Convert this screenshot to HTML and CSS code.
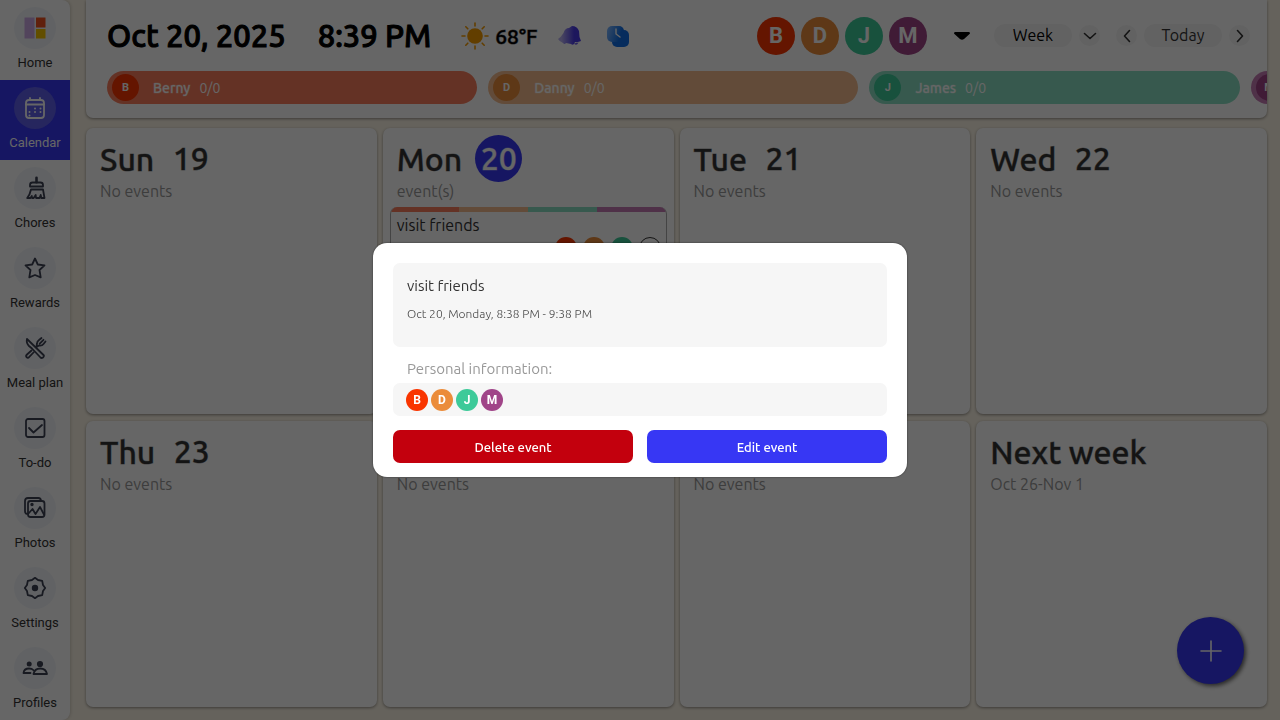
FILE: index.html
```html
<!DOCTYPE html>
<html lang="en">
<head>
    <meta charset="UTF-8">
    <meta name="viewport" content="width=device-width, initial-scale=1.0">
    <title>Family Calendar</title>
    <link rel="stylesheet" href="styles.css">
</head>
<body>
    <div class="app">
        <nav class="sidebar">
            <a class="nav-item" href="#home">
                <span class="nav-icon">
                    <svg width="22" height="22" viewBox="0 0 22 22">
                        <rect x="0.5" y="0.5" width="10" height="21" fill="#cdaae6"/>
                        <rect x="12" y="0.5" width="9.5" height="10" fill="#f0501e"/>
                        <rect x="12" y="12" width="9.5" height="9.5" fill="#f5c400"/>
                    </svg>
                </span>
                <span>Home</span>
            </a>
            <a class="nav-item active" href="#calendar">
                <span class="nav-icon">
                    <svg class="line" width="24" height="24" viewBox="0 0 24 24">
                        <rect x="3" y="4" width="18" height="18" rx="3"/>
                        <path d="M3 8.5h18M7 2v2M17 2v2"/>
                        <path class="dots" d="M12 12.500h.01M17.500 12.500h.01M6.500 16h.01M12 16h.01M17.500 16h.01M6.500 19.500h.01"/>
                    </svg>
                </span>
                <span>Calendar</span>
            </a>
            <a class="nav-item" href="#chores">
                <span class="nav-icon">
                    <svg class="line" width="24" height="24" viewBox="0 0 24 24">
                        <path d="M13.500 1.800v4.400" stroke-width="2.600"/>
                        <path d="M7 10.500V9q0-2.500 2.500-2.500h8Q20 6.500 20 9v1.500zM8 13.500h12l1.500 8.500h-3.200l-.6-3-1.200 3H13l-.3-3-2 3H9l-.2-2L7.500 22H4.200Q7 18.500 8 13.500z"/>
                    </svg>
                </span>
                <span>Chores</span>
            </a>
            <a class="nav-item" href="#rewards">
                <span class="nav-icon">
                    <svg class="line" width="24" height="24" viewBox="0 0 24 24">
                        <path d="M12 2.500l2.800 6 6.700.8-5 4.700 1.200 7.300-5.700-2.300-5.700 2.300 1.200-7.300-5-4.700 6.700-.8z"/>
                    </svg>
                </span>
                <span>Rewards</span>
            </a>
            <a class="nav-item" href="#meals">
                <span class="nav-icon">
                    <svg class="line" width="24" height="24" viewBox="0 0 24 24">
                        <path d="M4 3q-1 4 2 7l3 2.500 8.500 9q1 1 2.500 0 1.500-1.500.5-2.500zM13.500 11l2.500-1.500q3 .5 4.500-1.500l2-2.500M13.500 11l.5-3.500q0-2 2-3.500L18.500 2M20.500 3.800l-3.800 3.800M8.500 14.500l-4.500 4q-1.500 1.500-.5 2.500 1.500 1.500 2.500.2l4.500-4.700"/>
                    </svg>
                </span>
                <span>Meal plan</span>
            </a>
            <a class="nav-item" href="#todo">
                <span class="nav-icon">
                    <svg class="line" width="24" height="24" viewBox="0 0 24 24">
                        <rect x="3" y="3" width="18.500" height="18" rx="2"/>
                        <path d="M6 12l4.500 4.500 8.500-7.500"/>
                    </svg>
                </span>
                <span>To-do</span>
            </a>
            <a class="nav-item" href="#photos">
                <span class="nav-icon">
                    <svg class="line" width="24" height="24" viewBox="0 0 24 24">
                        <rect x="5" y="5" width="16.500" height="16" rx="2.500"/>
                        <path d="M4 18Q2 17.500 2 15V5q0-3 3-3h10.500q2 0 2.500 2.500M5.500 17.500l4-4.500 3 5 4.500-7 4 7.500"/>
                        <circle cx="9" cy="8.500" r=".8"/>
                    </svg>
                </span>
                <span>Photos</span>
            </a>
            <a class="nav-item" href="#settings">
                <span class="nav-icon">
                    <svg class="line" width="24" height="24" viewBox="0 0 24 24">
                        <path d="M12 1.800l3 2.200 4.200.8.800 4.200 2.200 3-2.200 3-.8 4.200-4.200.8-3 2.200-3-2.200-4.200-.8L4 15l-2.200-3L4 9l.8-4.200L9 4z"/>
                        <circle class="solid" cx="12" cy="12" r="2.300"/>
                    </svg>
                </span>
                <span>Settings</span>
            </a>
            <a class="nav-item" href="#profiles">
                <span class="nav-icon">
                    <svg class="line" width="26" height="24" viewBox="0 0 26 24">
                        <circle class="solid" cx="7.200" cy="8" r="1.600"/>
                        <circle class="solid" cx="18" cy="8" r="2.200"/>
                        <path d="M11.500 18q1-5.500 6.700-5.500T25 18zM8.500 17H1.500q.5-4.500 5.500-4.500 3 0 4.200 1.500"/>
                    </svg>
                </span>
                <span>Profiles</span>
            </a>
        </nav>

        <main class="main">
            <header class="topbar">
                <div class="topbar-row">
                    <div class="clock">
                        <span>Oct 20, 2025</span>
                        <span>8:39 PM</span>
                    </div>
                    <div class="weather">
                        <svg width="28" height="28" viewBox="0 0 28 28">
                            <circle cx="14" cy="14" r="7.800" fill="#f59b00"/>
                            <path d="M14 1v3M14 24v3M1 14h3M24 14h3M4.800 4.800l2 2M21.200 21.200l2 2M4.800 23.200l2-2M21.200 6.800l2-2" stroke="#f59b00" stroke-width="1.600" stroke-linecap="round"/>
                        </svg>
                        <span>68°F</span>
                    </div>
                    <div class="status">
                        <svg width="24" height="24" viewBox="0 0 24 24">
                            <defs>
                                <linearGradient id="bell" x1="0" x2="1">
                                    <stop offset="0.150" stop-color="#b7b0f2"/>
                                    <stop offset="0.700" stop-color="#4a3be8"/>
                                </linearGradient>
                            </defs>
                            <path d="M1 15q3-2 5.500-6Q8 4 12 4l3-2q5 0 7 5l.5 6 1.500 4q-3 1.500-6 1l-1 2q-1.500 1.500-3 0l-5-1q-1.500 2-3 0Q2.500 17.500 1 15z" fill="url(#bell)"/>
                            <path d="M17 19.500q2.500 3 4.500-1z" fill="#6a5ee8"/>
                        </svg>
                        <svg width="24" height="24" viewBox="0 0 24 24">
                            <defs>
                                <linearGradient id="clock" x1="0" y1="0.300" x2="1" y2="0.600">
                                    <stop offset="0" stop-color="#79b4ff"/>
                                    <stop offset="0.800" stop-color="#0f6fe8"/>
                                </linearGradient>
                            </defs>
                            <rect x="6" y="6" width="17" height="17" rx="5" fill="#0f6fe8"/>
                            <rect x="1" y="2" width="17" height="16" rx="5" fill="url(#clock)"/>
                            <path d="M10 5v5l4 3" fill="none" stroke="#fff" stroke-width="1.400" stroke-linecap="round"/>
                        </svg>
                    </div>
                    <div class="controls">
                        <div class="people">
                            <span class="avatar avatar-lg berny">B</span>
                            <span class="avatar avatar-lg danny">D</span>
                            <span class="avatar avatar-lg james">J</span>
                            <span class="avatar avatar-lg mary">M</span>
                        </div>
                        <button class="caret" aria-label="Filter people">
                            <svg width="18" height="10" viewBox="0 0 18 10"><path d="M2 1h14q2 1 0 2.500L11 8q-2 1.500-4 0L2 3.500Q0 2 2 1z" fill="#000"/></svg>
                        </button>
                        <div class="view">
                            <button class="pill">Week</button>
                            <button class="round" aria-label="Change view">
                                <svg width="14" height="14" viewBox="0 0 14 14"><path d="M1.500 4.500L7 9.500l5.500-5"/></svg>
                            </button>
                        </div>
                        <div class="view">
                            <button class="round" aria-label="Previous">
                                <svg width="14" height="14" viewBox="0 0 14 14"><path d="M9.500 1.500L4.500 7l5 5.500"/></svg>
                            </button>
                            <button class="pill today-btn">Today</button>
                            <button class="round" aria-label="Next">
                                <svg width="14" height="14" viewBox="0 0 14 14"><path d="M4.500 1.500l5 5.500-5 5.500"/></svg>
                            </button>
                        </div>
                    </div>
                </div>
                <div class="tasks">
                    <div class="task berny-soft"><span class="avatar avatar-md berny">B</span><b>Berny</b><span>0/0</span></div>
                    <div class="task danny-soft"><span class="avatar avatar-md danny">D</span><b>Danny</b><span>0/0</span></div>
                    <div class="task james-soft"><span class="avatar avatar-md james">J</span><b>James</b><span>0/0</span></div>
                    <div class="task mary-soft"><span class="avatar avatar-md mary">M</span></div>
                </div>
            </header>

            <section class="week">
                <article class="day">
                    <h2><span>Sun</span><span class="num">19</span></h2>
                    <p>No events</p>
                </article>
                <article class="day">
                    <h2><span>Mon</span><span class="num current">20</span></h2>
                    <p>event(s)</p>
                    <div class="event">
                        <div class="stripes">
                            <i class="berny-soft"></i><i class="danny-soft"></i><i class="james-soft"></i><i class="mary-soft"></i>
                        </div>
                        <div class="event-title">visit friends</div>
                        <div class="event-people">
                            <span class="avatar avatar-sm berny">B</span>
                            <span class="avatar avatar-sm danny">D</span>
                            <span class="avatar avatar-sm james">J</span>
                            <span class="avatar avatar-sm more">+1</span>
                        </div>
                    </div>
                </article>
                <article class="day">
                    <h2><span>Tue</span><span class="num">21</span></h2>
                    <p>No events</p>
                </article>
                <article class="day">
                    <h2><span>Wed</span><span class="num">22</span></h2>
                    <p>No events</p>
                </article>
                <article class="day">
                    <h2><span>Thu</span><span class="num">23</span></h2>
                    <p>No events</p>
                </article>
                <article class="day">
                    <h2><span>Fri</span><span class="num">24</span></h2>
                    <p>No events</p>
                </article>
                <article class="day">
                    <h2><span>Sat</span><span class="num">25</span></h2>
                    <p>No events</p>
                </article>
                <article class="day">
                    <h2><span>Next week</span></h2>
                    <p>Oct 26-Nov 1</p>
                </article>
            </section>
        </main>
    </div>

    <button class="fab" aria-label="Add event">
        <svg width="22" height="22" viewBox="0 0 22 22"><path d="M11 1v20M1 11h20" stroke="#fff" stroke-width="1.600" stroke-linecap="round"/></svg>
    </button>

    <div class="overlay">
        <div class="modal" role="dialog" aria-label="Event details">
            <div class="details">
                <h3>visit friends</h3>
                <p>Oct 20, Monday, 8:38 PM - 9:38 PM</p>
            </div>
            <div class="label">Personal information:</div>
            <div class="members">
                <span class="avatar avatar-sm berny">B</span>
                <span class="avatar avatar-sm danny">D</span>
                <span class="avatar avatar-sm james">J</span>
                <span class="avatar avatar-sm mary">M</span>
            </div>
            <div class="actions">
                <button class="btn delete">Delete event</button>
                <button class="btn edit">Edit event</button>
            </div>
        </div>
    </div>
</body>
</html>
```
FILE: styles.css
```css
* {
    box-sizing: border-box;
}

body {
    margin: 0;
    font-family: Ubuntu, "Noto Sans", sans-serif;
    color: #333;
    background: #fcf5e6;
}

h2, h3, p {
    margin: 0;
    font-weight: 400;
}

button {
    border: 0;
    padding: 0;
    font-family: inherit;
    cursor: pointer;
}

.app {
    display: flex;
    min-height: 100vh;
}

/* sidebar */
.sidebar {
    flex: 0 0 70px;
    background: #fff;
    border-radius: 0 8px 8px 0;
    box-shadow: 1px 0 3px rgba(0, 0, 0, 0.15);
}

.nav-item {
    display: flex;
    flex-direction: column;
    align-items: center;
    height: 80px;
    padding-top: 7px;
    gap: 5px;
    font: 400 13px/18px Roboto, sans-serif;
    color: #333;
    text-decoration: none;
    white-space: nowrap;
}

.nav-icon {
    display: flex;
    align-items: center;
    justify-content: center;
    width: 42px;
    height: 42px;
    border-radius: 50%;
    background: #f3f6fb;
}

.nav-item.active {
    background: #3737f4;
    color: #fff;
}

.active .nav-icon {
    background: #5f5fec;
}

.line {
    fill: none;
    stroke: #3d4254;
    stroke-width: 1.8;
    stroke-linejoin: round;
    stroke-linecap: round;
}

.active .line {
    stroke: #fff;
}

.line .dots {
    stroke-width: 2;
}

.line .solid {
    fill: #3d4254;
}

/* header */
.main {
    flex: 1;
    min-width: 0;
    display: flex;
    flex-direction: column;
    gap: 10px;
    padding: 0 13px 13px 16px;
}

.topbar {
    display: flex;
    flex-direction: column;
    gap: 9px;
    padding: 9px 0 14px 21px;
    background: #fff;
    border-radius: 0 0 7px 7px;
    box-shadow: 0 1px 3px rgba(0, 0, 0, 0.4);
    overflow: hidden;
}

.topbar-row {
    display: flex;
    align-items: center;
    height: 53px;
    padding-right: 17px;
    color: #000;
    white-space: nowrap;
}

.clock {
    display: flex;
    gap: 32px;
    font-size: 31px;
    font-weight: 500;
    -webkit-text-stroke: 1px #000;
}

.weather {
    display: flex;
    align-items: center;
    gap: 6px;
    margin-left: 30px;
    font-size: 21px;
    font-weight: 500;
    -webkit-text-stroke: 1px rgba(0, 0, 0, 0.5);
}

.status {
    display: flex;
    gap: 25px;
    margin-left: 20px;
}

.controls {
    display: flex;
    align-items: center;
    margin-left: auto;
}

.people {
    display: flex;
    gap: 6px;
}

.avatar {
    display: flex;
    align-items: center;
    justify-content: center;
    flex: none;
    border-radius: 50%;
    color: #fff;
    font-family: Roboto, sans-serif;
    font-weight: 700;
}

.avatar-lg {
    width: 38px;
    height: 38px;
    font-size: 22px;
}

.avatar-md {
    width: 27px;
    height: 27px;
    font-size: 11px;
}

.avatar-sm {
    width: 22px;
    height: 22px;
    font-size: 12px;
}

.berny { background: #f93500; }
.danny { background: #eb8c3a; }
.james { background: #3dca99; }
.mary { background: #a04488; }

.berny-soft { background: #fb7e5d; }
.danny-soft { background: #f4bc8e; }
.james-soft { background: #8bdec2; }
.mary-soft { background: #c57bb4; }

.more {
    background: #fff;
    border: 1px solid #333;
    color: #333;
}

.caret {
    display: flex;
    margin: 0 23px 0 26px;
    background: none;
}

.view {
    display: flex;
    align-items: center;
    gap: 7px;
}

.view + .view {
    margin-left: 16px;
}

.pill {
    width: 78px;
    height: 23px;
    border-radius: 12px;
    background: #f5f5f5;
    font-size: 16px;
    line-height: 23px;
    color: #000;
}

.today-btn {
    color: #333;
}

.round {
    display: flex;
    align-items: center;
    justify-content: center;
    width: 21px;
    height: 21px;
    border-radius: 50%;
    background: #f5f5f5;
}

.round svg {
    fill: none;
    stroke: #333;
    stroke-width: 1.6;
    stroke-linecap: round;
    stroke-linejoin: round;
}

.tasks {
    display: flex;
    gap: 11px;
}

.task {
    flex: 0 0 calc(32% - 1px);
    display: flex;
    align-items: center;
    height: 33px;
    padding-left: 5px;
    border-radius: 17px;
    color: #fff;
    font-size: 14px;
}

.task b {
    margin: 0 9px 0 14px;
    font-weight: 500;
    -webkit-text-stroke: 1px rgba(255, 255, 255, 0.3);
}

/* week grid */
.week {
    flex: 1;
    display: grid;
    grid-template-columns: repeat(4, 1fr);
    grid-auto-rows: 1fr;
    gap: 7px 6px;
}

.day {
    padding: 7px;
    background: #fff;
    border-radius: 7px;
    box-shadow: 0 1px 3px rgba(0, 0, 0, 0.4);
}

.day h2 {
    display: flex;
    align-items: center;
    gap: 13px;
    height: 47px;
    padding-left: 7px;
    font-size: 32px;
    font-weight: 500;
    -webkit-text-stroke: 1px rgba(51, 51, 51, 0.4);
}

.num {
    width: 47px;
    height: 47px;
    line-height: 47px;
    border-radius: 50%;
    text-align: center;
}

.num.current {
    background: #3737f4;
    color: #fff;
    -webkit-text-stroke: 1px rgba(255, 255, 255, 0.4);
}

.day p {
    padding-left: 7px;
    font-size: 16px;
    line-height: 18px;
    color: #999;
}

.event {
    margin-top: 7px;
    border: 1px solid #aaa;
    border-top: 0;
    border-radius: 7px;
    overflow: hidden;
}

.stripes {
    display: flex;
    height: 5px;
}

.stripes i {
    flex: 1;
}

.event-title {
    padding: 2px 6px 0;
    font-size: 16px;
    line-height: 23px;
}

.event-people {
    display: flex;
    justify-content: flex-end;
    gap: 6px;
    padding: 0 5px 5px;
}

.fab {
    position: fixed;
    right: 36px;
    bottom: 36px;
    display: flex;
    align-items: center;
    justify-content: center;
    width: 67px;
    height: 67px;
    border-radius: 50%;
    background: #3737f4;
    box-shadow: 2px 2px 4px rgba(0, 0, 0, 0.6);
}

/* event dialog */
.overlay {
    position: fixed;
    inset: 0;
    display: flex;
    align-items: center;
    justify-content: center;
    background: rgba(0, 0, 0, 0.6);
}

.modal {
    width: 534px;
    padding: 20px 20px 14px;
    border-radius: 14px;
    background: #fff;
    box-shadow: 0 0 2px rgba(0, 0, 0, 0.6);
}

.details {
    height: 84px;
    padding: 13px 14px;
    border-radius: 7px;
    background: #f6f6f6;
}

.details h3 {
    font-size: 15px;
    line-height: 20px;
}

.details p {
    margin-top: 9px;
    font-size: 12px;
    font-weight: 300;
    line-height: 18px;
    color: #444;
}

.label {
    padding: 12px 14px 4px;
    font-size: 15px;
    line-height: 20px;
    color: #999;
}

.members {
    display: flex;
    align-items: center;
    gap: 3px;
    height: 33px;
    padding: 0 13px;
    border-radius: 7px;
    background: #f6f6f6;
}

.actions {
    display: flex;
    gap: 14px;
    margin-top: 14px;
}

.btn {
    flex: 1;
    height: 33px;
    border-radius: 7px;
    color: #fff;
    font-size: 13px;
    font-weight: 500;
}

.delete {
    background: #c3000d;
}

.edit {
    background: #3737f4;
}
```
